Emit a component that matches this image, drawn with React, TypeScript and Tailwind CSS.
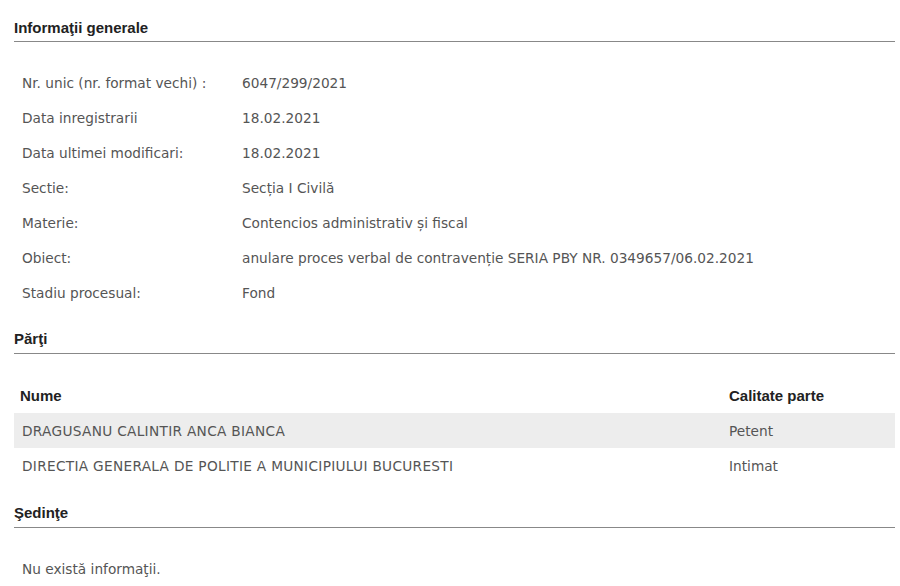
export default function App() {
  const rows: [string, string][] = [
    ["Nr. unic (nr. format vechi) :", "6047/299/2021"],
    ["Data inregistrarii", "18.02.2021"],
    ["Data ultimei modificari:", "18.02.2021"],
    ["Sectie:", "Secția I Civilă"],
    ["Materie:", "Contencios administrativ și fiscal"],
    ["Obiect:", "anulare proces verbal de contravenție SERIA PBY NR. 0349657/06.02.2021"],
    ["Stadiu procesual:", "Fond"],
  ];
  const body = "font-['DejaVu_Sans',sans-serif] text-[13.7px] leading-[20px] text-[#555]";
  const head = "font-['Liberation_Sans',Arial,sans-serif] font-bold text-[15px] leading-[20px] text-[#222]";
  return (
    <div className="w-[900px] h-[586px] bg-white pl-[14px] pr-[5px] overflow-hidden">
      <div className={`${head} pt-[18px] pb-[3px] border-b border-[#888]`}>Informaţii generale</div>
      <div className={`${body} pt-[23px]`}>
        {rows.map(([k, v]) => (
          <div key={k} className="flex h-[35px] items-center">
            <div className="w-[228px] pl-[8px]">{k}</div>
            <div>{v}</div>
          </div>
        ))}
      </div>
      <div className={`${head} pt-[19px] pb-[4px] border-b border-[#888]`}>Părţi</div>
      <div className="pt-[24px]">
        <div className={`${head} flex h-[35px] items-center`}>
          <div className="flex-1 pl-[6px]">Nume</div>
          <div className="w-[166px]">Calitate parte</div>
        </div>
        <div className={`${body} flex h-[35px] items-center bg-[#ededed]`}>
          <div className="flex-1 pl-[8px] tracking-[0.3px]">DRAGUSANU CALINTIR ANCA BIANCA</div>
          <div className="w-[166px]">Petent</div>
        </div>
        <div className={`${body} flex h-[35px] items-center`}>
          <div className="flex-1 pl-[8px] tracking-[0.3px]">DIRECTIA GENERALA DE POLITIE A MUNICIPIULUI BUCURESTI</div>
          <div className="w-[166px]">Intimat</div>
        </div>
      </div>
      <div className={`${head} pt-[20px] pb-[4px] border-b border-[#888]`}>Şedinţe</div>
      <div className={`${body} pt-[31px] pl-[8px]`}>Nu există informaţii.</div>
    </div>
  );
}
